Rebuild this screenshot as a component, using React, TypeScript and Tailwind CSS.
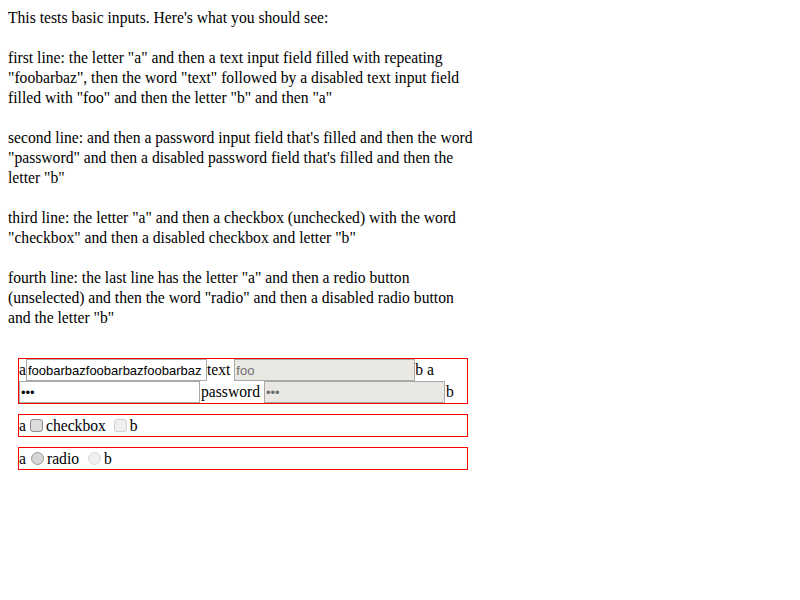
import React from "react";

const lines: string[][] = [
  ["This tests basic inputs. Here's what you should see:"],
  [
    'first line: the letter "a" and then a text input field filled with repeating',
    '"foobarbaz", then the word "text" followed by a disabled text input field',
    'filled with "foo" and then the letter "b" and then "a"',
  ],
  [
    "second line: and then a password input field that's filled and then the word",
    "\"password\" and then a disabled password field that's filled and then the",
    'letter "b"',
  ],
  [
    'third line: the letter "a" and then a checkbox (unchecked) with the word',
    '"checkbox" and then a disabled checkbox and letter "b"',
  ],
  [
    'fourth line: the last line has the letter "a" and then a redio button',
    '(unselected) and then the word "radio" and then a disabled radio button',
    'and the letter "b"',
  ],
];

const inputBase =
  "box-border h-[22px] w-[181px] border border-solid border-[#a9a9a9] px-[1px] py-0 font-['Liberation_Sans',Arial,sans-serif] text-[13px] leading-[18px] outline-none";

export default function App() {
  return (
    <div className="min-h-[600px] bg-white p-[8px] font-['Liberation_Serif','Times_New_Roman',serif] text-[15.65px] leading-[20px] text-black">
      <div className="flex flex-col gap-[20px]">
        {lines.map((para, i) => (
          <div key={i}>
            {para.map((l, j) => (
              <div key={j} className="whitespace-nowrap">
                {l}
              </div>
            ))}
          </div>
        ))}
      </div>

      <div className="ml-[10px] mt-[30px] flex w-[450px] flex-col gap-[10px]">
        <div className="border border-solid border-[#ff0000]">
          <div className="flex h-[22px] items-center whitespace-pre">
            <span>a</span>
            <input className={`${inputBase} bg-white text-black`} defaultValue="foobarbazfoobarbazfoobarbaz" readOnly />
            <span>text </span>
            <input className={`${inputBase} bg-[#e9e8e2] text-[#6d6d6d]`} defaultValue="foo" disabled />
            <span>b a</span>
          </div>
          <div className="flex h-[22px] items-center whitespace-pre">
            <input type="password" className={`${inputBase} bg-white text-black`} defaultValue="foo" readOnly />
            <span className="ml-[1px]">password </span>
            <input type="password" className={`${inputBase} bg-[#e9e8e2] text-[#6d6d6d]`} defaultValue="foo" disabled />
            <span className="ml-[1px]">b</span>
          </div>
        </div>

        <div className="border border-solid border-[#ff0000]">
          <div className="flex h-[21px] items-center whitespace-pre">
            <span>a</span>
            <span className="ml-[4px] mr-[3px] box-border inline-block h-[13px] w-[13px] rounded-[3px] border border-solid border-[#8d8d8d] bg-[#dcdcdc]" />
            <span>checkbox </span>
            <span className="ml-[4px] mr-[3px] box-border inline-block h-[13px] w-[13px] rounded-[3px] border border-solid border-[#cfcfcf] bg-[#efefef]" />
            <span>b</span>
          </div>
        </div>

        <div className="border border-solid border-[#ff0000]">
          <div className="flex h-[21px] items-center whitespace-pre">
            <span>a</span>
            <span className="ml-[5px] mr-[3px] box-border inline-block h-[13px] w-[13px] rounded-full border border-solid border-[#9a9a9a] bg-[#d6d6d6]" />
            <span>radio </span>
            <span className="ml-[5px] mr-[3px] box-border inline-block h-[13px] w-[13px] rounded-full border border-solid border-[#dadada] bg-[#f0f0f0]" />
            <span>b</span>
          </div>
        </div>
      </div>
    </div>
  );
}
